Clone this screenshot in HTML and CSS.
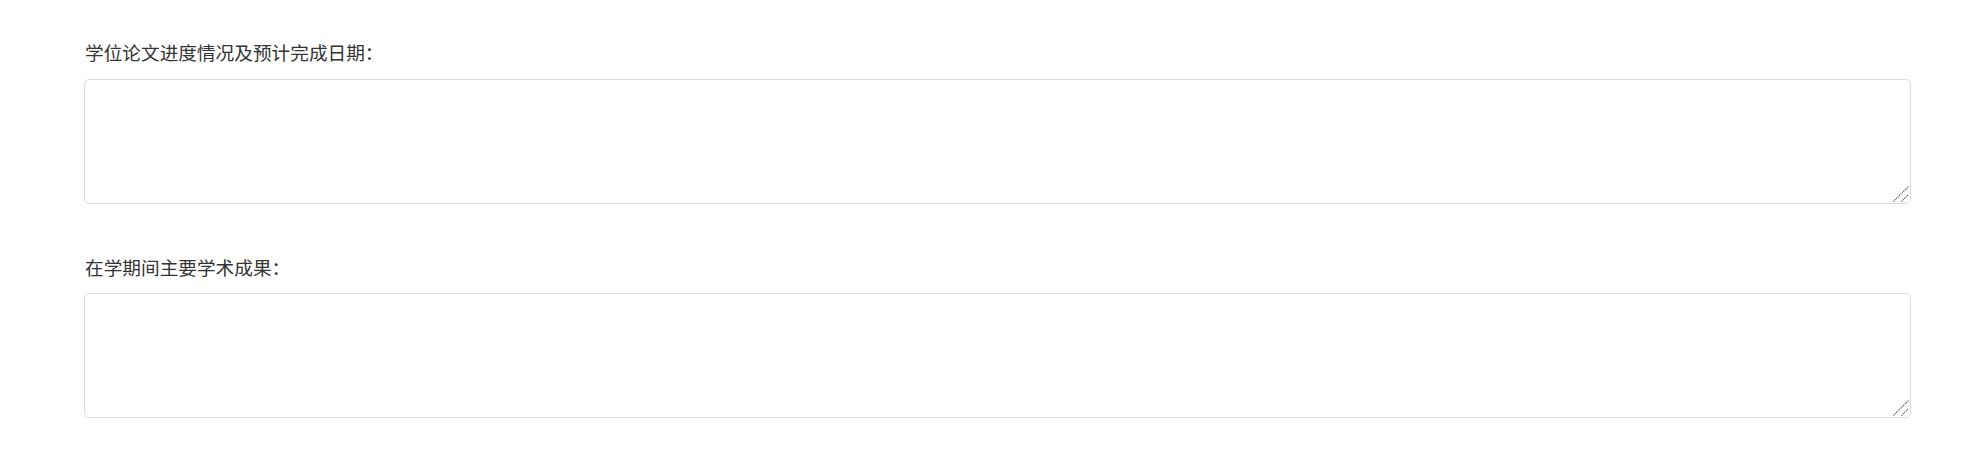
FILE: index.html
```html
<!DOCTYPE html>
<html lang="zh-CN">
<head>
<meta charset="utf-8">
<title>学位论文</title>
<link rel="stylesheet" href="styles.css">
</head>
<body>
<form class="form">
  <div class="field">
    <label class="label" for="progress">学位论文进度情况及预计完成日期：</label>
    <div class="textarea-wrap">
      <textarea id="progress" class="textarea"></textarea>
      <svg class="resizer" width="16" height="16" viewBox="0 0 16 16" aria-hidden="true">
        <line x1="0.5" y1="15.5" x2="15.5" y2="0.5"/>
        <line x1="8.5" y1="15.5" x2="15.5" y2="8.5"/>
      </svg>
    </div>
  </div>
  <div class="field">
    <label class="label" for="results">在学期间主要学术成果：</label>
    <div class="textarea-wrap">
      <textarea id="results" class="textarea"></textarea>
      <svg class="resizer" width="16" height="16" viewBox="0 0 16 16" aria-hidden="true">
        <line x1="0.5" y1="15.5" x2="15.5" y2="0.5"/>
        <line x1="8.5" y1="15.5" x2="15.5" y2="8.5"/>
      </svg>
    </div>
  </div>
</form>
</body>
</html>
```

FILE: styles.css
```css
html, body {
  margin: 0;
  padding: 0;
  background: #ffffff;
}
body {
  font-family: "Noto Sans CJK SC", "Liberation Sans", sans-serif;
  color: #333333;
  font-size: 18.67px;
}
.form {
  display: flex;
  flex-direction: column;
  padding: 39px 62px 0 84px;
}
.field {
  display: flex;
  flex-direction: column;
}
.field + .field {
  margin-top: 50px;
}
.label {
  display: block;
  line-height: 26.67px;
  margin-bottom: 13px;
  margin-left: 1px;
}
.textarea-wrap {
  position: relative;
  display: flex;
}
.textarea {
  box-sizing: border-box;
  width: 100%;
  height: 125px;
  margin: 0;
  border: 1px solid #dcdcdc;
  border-radius: 5px;
  background: #ffffff;
  font: inherit;
  resize: none;
}
.resizer {
  position: absolute;
  right: 2px;
  bottom: 2px;
  pointer-events: none;
}
.resizer line {
  stroke: #333333;
  stroke-width: 1.1;
  stroke-dasharray: 1 1;
}
```
